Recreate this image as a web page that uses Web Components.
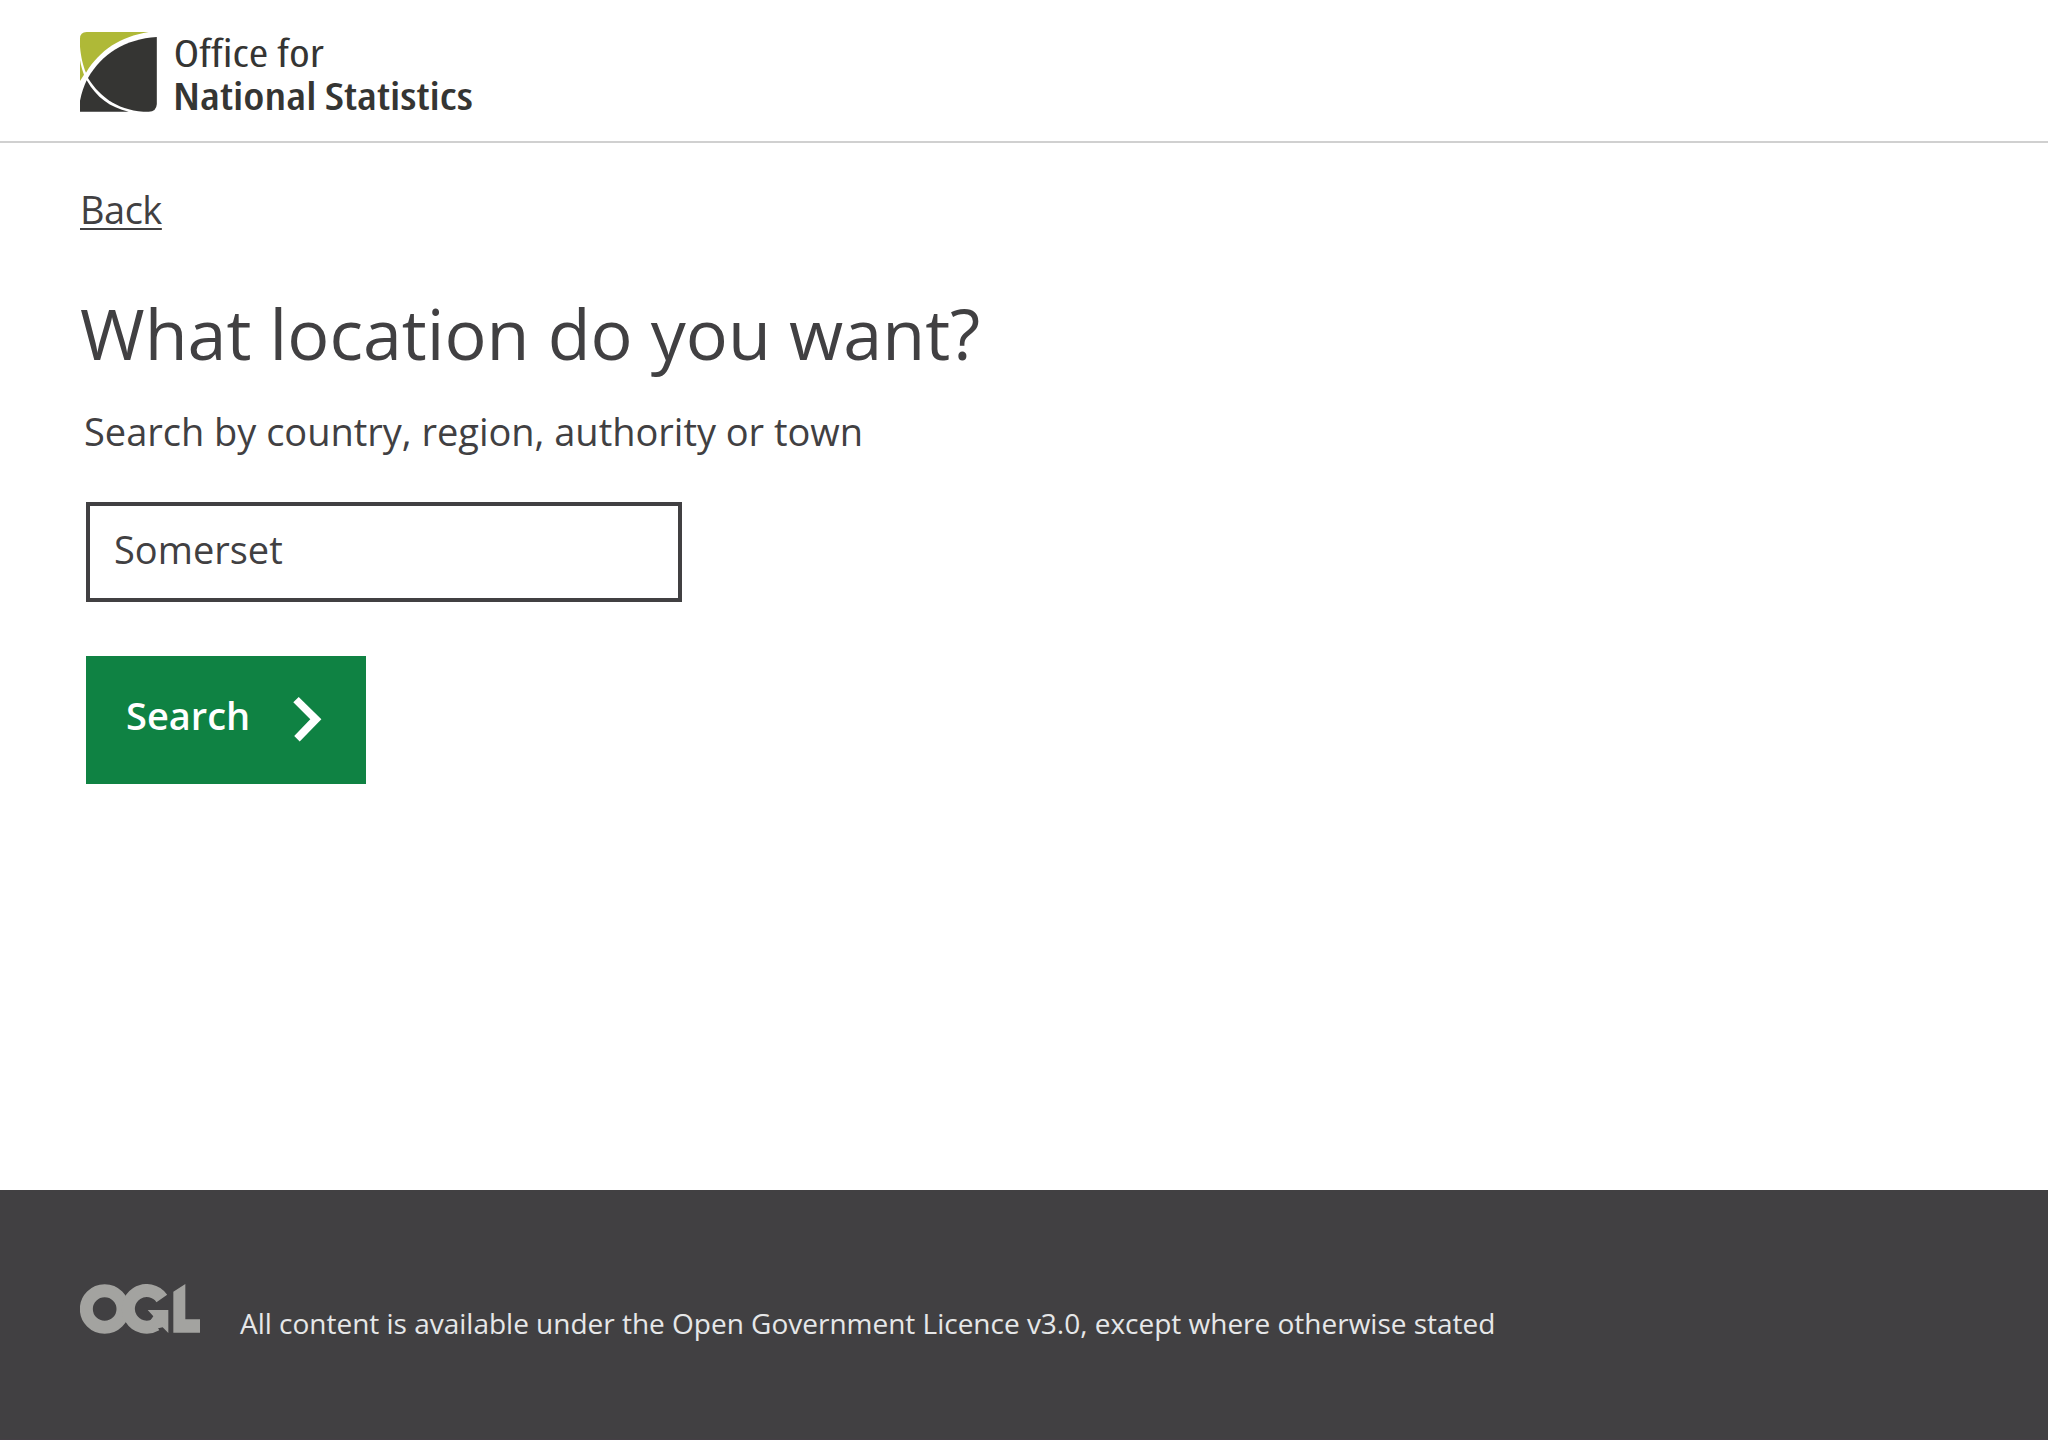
<!DOCTYPE html>
<html lang="en">
<head>
<meta charset="utf-8">
<title>What location do you want?</title>
<style>
  html, body { margin: 0; height: 100%; background: #fff; }
  body { font-family: "Open Sans", "Noto Sans", sans-serif; color: #414042; }
</style>
</head>
<body>
<ons-page>
  <ons-header slot="header"></ons-header>
  <ons-back-link>Back</ons-back-link>
  <ons-title>What location do you want?</ons-title>
  <ons-field label="Search by country, region, authority or town" value="Somerset"></ons-field>
  <ons-button>Search</ons-button>
  <ons-footer slot="footer">All content is available under the Open Government Licence v3.0, except where otherwise stated</ons-footer>
</ons-page>
<script>
const define = (name, html) => customElements.define(name, class extends HTMLElement {
  connectedCallback() {
    if (this.shadowRoot) return;
    const root = this.attachShadow({ mode: 'open' });
    root.innerHTML = typeof html === 'function' ? html(this) : html;
  }
});

define('ons-page', `
<style>
  :host { display: flex; flex-direction: column; height: 1440px; overflow: hidden; }
  main { flex: 1; display: flex; flex-direction: column; align-items: flex-start; padding: 41px 80px 0; }
</style>
<slot name="header"></slot><main><slot></slot></main><slot name="footer"></slot>`);

define('ons-logo', `
<style>
  :host { display: block; }
  svg { display: block; overflow: visible; }
  text { font-variant-ligatures: none; }
  .thin { font-weight: 375; font-stretch: 87%; }
  .bold { font-weight: 610; font-stretch: 87%; }
</style>
<svg width="400" height="108" viewBox="0 -12 400 108" fill="#353533" role="img">
  <g transform="scale(.33333) translate(-30 -36)">
    <path fill="#afb937" d="M30 56Q30 36 50 36H236C150 50 90 90 48 158C39 136 33 112 30 80Z"/>
    <path fill="#afb937" d="M30 120C33 138 37 150 42 164L30 183Z"/>
    <path d="M260.500 51V252Q259 275 236 275.500C150 275 92 235 54 174C95 102 165 57 260.500 51Z"/>
    <path d="M30 242C35 218 42 198 50 181C80 233 120 262 176 275.500H30Z"/>
  </g>
  <text class="thin" x="93.500" y="35" font-size="39" textLength="150.500" lengthAdjust="spacingAndGlyphs">Office for</text>
  <text class="bold" x="93" y="78" font-size="38.500" textLength="300" lengthAdjust="spacingAndGlyphs">National Statistics</text>
</svg>`);

define('ons-header', `
<style>
  :host { display: flex; align-items: flex-start; box-sizing: border-box; height: 143px; padding: 20px 80px 0; border-bottom: 2px solid #d0d0d0; }
</style>
<ons-logo></ons-logo>`);

define('ons-back-link', `
<style>
  :host { display: block; font-size: 38px; letter-spacing: -.5px; line-height: 50px; }
  a { color: inherit; text-decoration: underline; text-decoration-thickness: 2px; text-underline-offset: 4px; }
</style>
<a href="#"><slot></slot></a>`);

define('ons-title', `
<style>
  :host { display: block; margin-top: 51px; }
  h1 { margin: 0; font-size: 70px; line-height: 96px; font-weight: 400; }
</style>
<h1><slot></slot></h1>`);

define('ons-field', el => `
<style>
  :host { display: flex; flex-direction: column; margin: 24px 0 0 4px; gap: 45px; }
  label { font-size: 38px; letter-spacing: -.02px; line-height: 52px; }
  .box { box-sizing: border-box; width: 596px; height: 100px; margin-left: 2px; border: 4px solid #414042; padding: 17px 24px 0; font-size: 38px; line-height: 52px; }
</style>
<label>${el.getAttribute('label')}</label>
<div class="box" role="textbox">${el.getAttribute('value')}</div>`);

define('ons-button', `
<style>
  :host { display: flex; box-sizing: border-box; width: 280px; height: 128px; margin: 54px 0 0 6px; padding: 33px 40px 0; background: #0f8243; color: #fff; font-size: 38px; font-weight: 600; line-height: 52px; justify-content: space-between; align-items: flex-start; }
  svg { display: block; margin: 8px 4px 0 0; }
</style>
<span><slot></slot></span>
<svg width="29" height="45" viewBox="293 697 29 45"><path fill="#fff" d="M293.300 702.300L298.700 697L321.400 719.300L299.700 741.400L294.200 735.900L310.300 719.300Z"/></svg>`);

define('ons-footer', `
<style>
  :host { display: flex; align-items: flex-start; box-sizing: border-box; height: 250px; padding: 94px 80px 0; gap: 40px; background: #414042; border-bottom: 1px solid #443f45; color: #e6e7e8; }
  svg { display: block; }
  p { margin: 19px 0 0; font-size: 28px; line-height: 40px; letter-spacing: -.01px; }
</style>
<svg width="120" height="50" viewBox="60 312 360 150" role="img" fill="#a3a3a0">
  <g fill="none" stroke="#a3a3a0" stroke-width="39">
    <circle cx="134" cy="387" r="55"/>
    <path d="M305.500 355.500A55 55 0 1 0 288 434"/>
  </g>
  <path d="M263 390H325V459L308 442L288 446L272 420L280 409Z"/>
  <path d="M340 335L376 312V418H420V458H340Z"/>
</svg>
<p><slot></slot></p>`);
</script>
</body>
</html>
